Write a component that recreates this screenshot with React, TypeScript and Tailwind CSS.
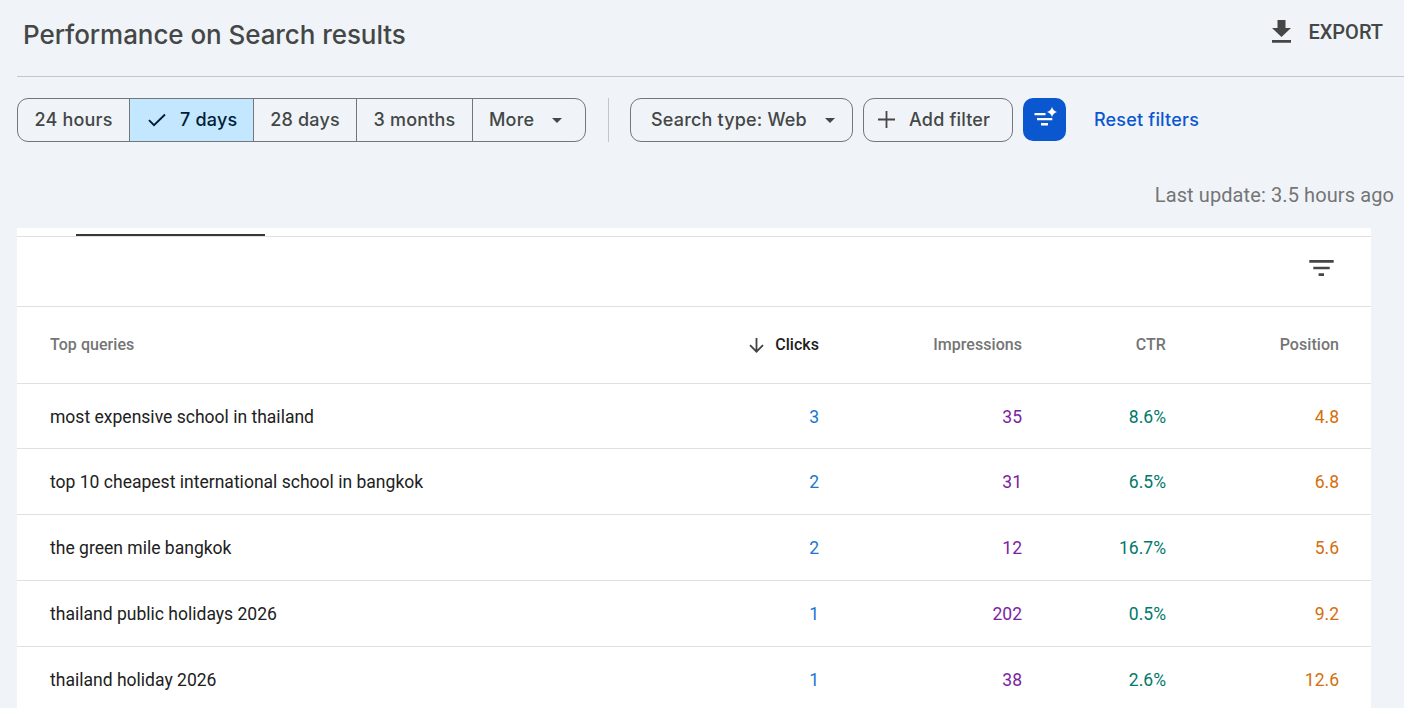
import clsx from 'clsx'

interface QueryRow {
  query: string
  clicks: string
  impressions: string
  ctr: string
  position: string
}

const rows: QueryRow[] = [
  { query: 'most expensive school in thailand', clicks: '3', impressions: '35', ctr: '8.6%', position: '4.8' },
  { query: 'top 10 cheapest international school in bangkok', clicks: '2', impressions: '31', ctr: '6.5%', position: '6.8' },
  { query: 'the green mile bangkok', clicks: '2', impressions: '12', ctr: '16.7%', position: '5.6' },
  { query: 'thailand public holidays 2026', clicks: '1', impressions: '202', ctr: '0.5%', position: '9.2' },
  { query: 'thailand holiday 2026', clicks: '1', impressions: '38', ctr: '2.6%', position: '12.6' },
]

const columns = 'grid grid-cols-[1fr_203px_144px_173px] items-center'

function Caret() {
  return (
    <svg width="10" height="5" viewBox="0 0 10 5" className="fill-current">
      <path d="M0 0h10L5 5z" />
    </svg>
  )
}

function Header() {
  return (
    <header className="ml-[17px] flex h-[77px] items-start justify-between border-b border-[#c4c7c9] pl-[6px] pr-[21px]">
      <h1 className="mt-[17px] font-['Inter',sans-serif] text-[26px] leading-9 font-medium tracking-[-0.07px] whitespace-nowrap">
        Performance on Search results
      </h1>
      <button className="mt-[15px] flex h-8 items-center gap-[17px] text-[20px] font-medium whitespace-nowrap">
        <svg width="19" height="23" viewBox="0 0 19 23" className="fill-current">
          <path d="M5.5 0h8v8h5.5L9.5 17 0 8h5.5zM0 20h19v2.7H0z" />
        </svg>
        <span className="pt-px">EXPORT</span>
      </button>
    </header>
  )
}

function DateRange() {
  return (
    <div className="flex h-11 w-[569px] overflow-hidden rounded-[11px] border border-[#747775]">
      <button className="w-[112px] border-r border-[#747775] pb-px">24 hours</button>
      <button className="flex w-[124px] items-center border-r border-[#747775] bg-[#c2e7ff] pl-[18px] text-[#001d35]">
        <svg width="18" height="14" viewBox="0 0 18 14" fill="none" stroke="currentColor" strokeWidth="1.9">
          <path d="M1 7.2l5 5L17 1.5" />
        </svg>
        <span className="ml-[14px] pb-px">7 days</span>
      </button>
      <button className="w-[103px] border-r border-[#747775] pb-px">28 days</button>
      <button className="w-[116px] border-r border-[#747775] pb-px">3 months</button>
      <button className="flex flex-1 items-center gap-[18px] pl-4">
        <span className="pb-px">More</span>
        <Caret />
      </button>
    </div>
  )
}

function Toolbar() {
  return (
    <div className="mt-[21px] ml-[17px] flex h-11 items-start font-['Inter',sans-serif] text-[18px] font-medium tracking-[0.19px] whitespace-nowrap">
      <DateRange />
      <div className="ml-[22px] h-11 w-px bg-[#c4c7c9]" />
      <button className="ml-[21px] flex h-11 w-[223px] items-center justify-between rounded-[11px] border border-[#747775] pr-[17px] pl-5">
        <span className="pb-px">Search type: Web</span>
        <Caret />
      </button>
      <button className="ml-[10px] flex h-11 w-[150px] items-center rounded-[11px] border border-[#747775] pl-[14px]">
        <svg width="17" height="17" viewBox="0 0 17 17" stroke="currentColor" strokeWidth="1.8" className="mb-px">
          <path d="M0 8.5h17M8.5 0v17" />
        </svg>
        <span className="ml-[14px] pb-px">Add filter</span>
      </button>
      <button className="ml-[10px] flex size-[43px] rounded-[10px] bg-[#0b57d0] pt-[9px] pl-[11px]">
        <svg width="23" height="20" viewBox="0 0 23 20" className="fill-white">
          <path d="M.5 6h11v2.3H.5zM3 11h15.3v2.3H3zM7 16h7v2.5H7z" />
          <path d="M18 0q1.2 3.8 5 5-3.8 1.2-5 5-1.2-3.8-5-5 3.8-1.2 5-5z" />
        </svg>
      </button>
      <button className="ml-7 h-[43px] text-[#0b57d0]">Reset filters</button>
    </div>
  )
}

function QueriesTable() {
  return (
    <section className="ml-[17px] w-[1354px] bg-white">
      {/* Bottom edge of the tab bar, with the active tab indicator */}
      <div className="h-[9px] border-b border-[#e0e0e0] pt-[6px] pl-[59px]">
        <div className="h-[2px] w-[189px] bg-[#3a3739]" />
      </div>
      <div className="flex h-[70px] justify-end border-b border-[#e0e0e0] pt-[23px] pr-[37px]">
        <svg width="25" height="17" viewBox="0 0 25 17" className="fill-[#444746]">
          <path d="M.3 0h24.4v2.7H.3zM4.3 6.7h16.4v2.6H4.3zM9.6 13.3h5.4v2.7H9.6z" />
        </svg>
      </div>
      <div className={clsx(columns, 'h-[77px] border-b border-[#e0e0e0] pr-8 pl-[33px] text-right text-[16px] font-medium tracking-[0.05px] text-[#757575]')}>
        <div className="flex items-center justify-between">
          <span>Top queries</span>
          <span className="flex items-center gap-[11px] text-[#212121]">
            <svg width="15" height="15" viewBox="0 0 15 15" fill="none" stroke="#424242" strokeWidth="1.8" className="mt-px">
              <path d="M7.5 0v13.5M1 7.2l6.5 6.5L14 7.2" />
            </svg>
            Clicks
          </span>
        </div>
        <span>Impressions</span>
        <span>CTR</span>
        <span>Position</span>
      </div>
      {rows.map((row, i) => (
        <div
          key={row.query}
          className={clsx(columns, i === 0 ? 'h-[65px]' : 'h-[66px]', 'border-b border-[#e0e0e0] pt-[2px] pr-8 pl-[33px] text-right text-[17.55px]')}
        >
          <div className="flex justify-between">
            <span className="text-[#212121]">{row.query}</span>
            <span className="text-[#1976d2]">{row.clicks}</span>
          </div>
          <span className="text-[#7b1fa2]">{row.impressions}</span>
          <span className="text-[#00796b]">{row.ctr}</span>
          <span className="text-[#d56e0c]">{row.position}</span>
        </div>
      ))}
    </section>
  )
}

export default function App() {
  return (
    <div className="h-[708px] w-[1404px] overflow-hidden bg-[#f0f4f9] font-['Roboto',sans-serif] text-[#444746]">
      <Header />
      <Toolbar />
      <div className="flex h-[86px] items-center justify-end pt-[19px] pr-[10px] text-[20px] tracking-[0.1px] text-[#757575]">
        Last update: 3.5 hours ago
      </div>
      <QueriesTable />
    </div>
  )
}
